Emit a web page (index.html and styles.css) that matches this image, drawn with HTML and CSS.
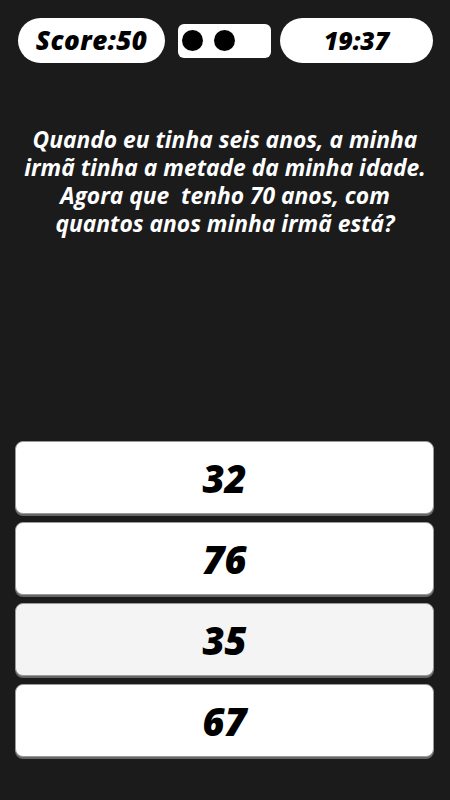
FILE: index.html
```html
<!DOCTYPE html>
<html lang="pt">
  <head>
    <title>Quiz</title>
    <meta charset="utf-8">
    <meta name="viewport" content="width=device-width, initial-scale=1">
    <link rel="stylesheet" href="styles.css">
  </head>
  <body>
    <main class="game">

      <header class="status">
        <div class="pill score">Score:50</div>
        <div class="lives">
          <span class="dot"></span>
          <span class="dot"></span>
        </div>
        <div class="pill timer">19:37</div>
      </header>

      <p class="question">Quando eu tinha seis anos, a minha<br>irmã tinha a metade da minha idade.<br>Agora que&nbsp; tenho 70 anos, com<br>quantos anos minha irmã está?</p>

      <section class="answers">
        <button class="answer">32</button>
        <button class="answer">76</button>
        <button class="answer answer-hover">35</button>
        <button class="answer">67</button>
      </section>

    </main>
  </body>
</html>
```

FILE: styles.css
```css
body {
  background-color: #1b1b1b;
  font-family: "Open Sans", sans-serif;
  margin: 0;
}

.game {
  display: flex;
  flex-direction: column;
  height: 800px;
}

.status {
  align-items: center;
  display: flex;
  padding: 18px 17px 0 18px;
}

.pill {
  background-color: white;
  border-radius: 23px;
  color: black;
  font-size: 25px;
  font-style: italic;
  font-weight: 800;
  height: 45px;
  line-height: 45px;
  text-align: center;
}

.score {
  font-size: 26px;
  letter-spacing: 0.5px;
  width: 147px;
}

.lives {
  background-color: white;
  border-radius: 6px;
  box-sizing: border-box;
  display: flex;
  gap: 11px;
  height: 34px;
  margin: 0 9px 0 13px;
  padding: 6px 0 0 4px;
  width: 93px;
}

.dot {
  background-color: black;
  border-radius: 50%;
  display: block;
  height: 21px;
  width: 21px;
}

.timer {
  flex: 1;
}

.question {
  color: white;
  font-size: 22.8px;
  font-style: italic;
  font-weight: 700;
  line-height: 28px;
  margin: 63px 0 0 0;
  text-align: center;
}

.answers {
  display: flex;
  flex-direction: column;
  gap: 8px;
  margin: auto 16px 43px 15px;
}

.answer {
  background-color: white;
  border: 1px solid #9a9a9a;
  border-radius: 8px;
  box-shadow: 0 2px 0 #666;
  color: black;
  font-family: "Open Sans", sans-serif;
  font-size: 38px;
  font-style: italic;
  font-weight: 800;
  height: 73px;
  padding: 0;
}

.answer-hover {
  background-color: #f4f4f4;
}
```
